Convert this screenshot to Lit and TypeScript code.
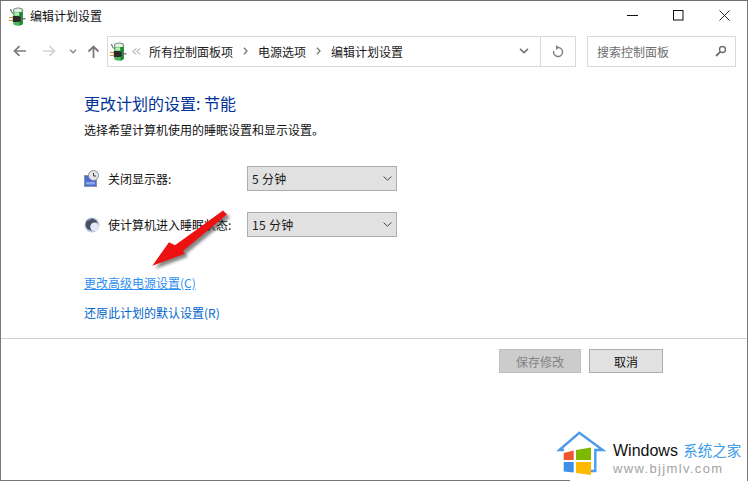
import { LitElement, html, css, svg } from "lit";
import { customElement } from "lit/decorators.js";

const plug = svg`
  <path d="M2.5 2Q3 5.5 6 7" fill="none" stroke="#6b6b6b" stroke-width="1.1"/>
  <ellipse cx="10" cy="3.6" rx="4.6" ry="2.6" fill="#e6efe6" stroke="#7c8f7c" stroke-width="1.2"/>
  <path d="M5.2 5H14.8V16Q14.8 18.8 10 18.8Q5.2 18.8 5.2 16Z" fill="#4cb854"/>
  <path d="M11.5 5H14.8V16Q14.8 18 11.5 18.5Z" fill="#1f8a3c"/>
  <path d="M6.5 5.5H11V8.6H6.5Z" fill="#b8ecbc"/>
  <path d="M4.8 9H10Q13 9 13 12Q13 15 10 15H4.8Z" fill="#2a2a2a"/>
  <path d="M12.5 11.8H17.5" stroke="#666" stroke-width="1.2"/>
  <path d="M1 10.5H5M1 13.5H5" stroke="#c79c2c" stroke-width="1.2"/>`;

@customElement("app-root")
export class AppRoot extends LitElement {
  static styles = css`
    :host { display: block; width: 748px; height: 481px; }
    .win {
      position: relative; box-sizing: border-box; width: 748px; height: 481px; overflow: hidden;
      background: #fff; border: 1px solid #7a7a7a; border-top: 1px solid #6f6f6f; border-bottom: none;
      font-family: "Noto Sans CJK SC", "Noto Sans", sans-serif; font-size: 12px; color: #1a1a1a;
      display: flex; flex-direction: column;
    }
    .title { height: 30px; display: flex; align-items: center; padding-left: 7px; gap: 3px; flex: none; }
    .title .t { flex: 1; font-size: 12px; color: #111; padding-bottom: 1px; }
    .caps { display: flex; height: 30px; }
    .cap { width: 46px; display: flex; align-items: center; justify-content: center; margin-bottom: 1px; }
    .nav { height: 30px; margin-top: 5px; display: flex; align-items: center; flex: none; padding-left: 12px; }
    .navbtns { width: 94px; display: flex; align-items: center; flex: none; }
    .b1 { width: 30px; display: flex; } .b2 { width: 26px; display: flex; } .b3 { width: 18px; display: flex; } .b4 { width: 20px; display: flex; }
    .addr {
      box-sizing: border-box; width: 469px; height: 31px; border: 1px solid #d9d9d9; display: flex; align-items: center;
      flex: none;
    }
    .crumbs { flex: 1; display: flex; align-items: center; padding-left: 1px; color: #1a1a1a; }
    .pi { margin-right: 4px; }
    .back { margin-right: 8px; display: flex; }
    .cr { margin-right: 10px; }
    .sep { margin-right: 10px; display: flex; }
    .addr .dd { width: 40px; height: 100%; border-right: 1px solid #d9d9d9; display: flex; align-items: center; justify-content: center; box-sizing: border-box; padding-left: 6px; }
    .addr .rf { width: 34px; display: flex; align-items: center; justify-content: center; }
    .search {
      box-sizing: border-box; width: 149px; height: 31px; margin-left: 11px; border: 1px solid #d9d9d9; display: flex;
      align-items: center; justify-content: space-between; padding: 0 8px 0 9px; color: #6d6d6d; flex: none;
    }
    .body { flex: 1; display: flex; flex-direction: column; padding: 26px 0 0 83px; }
    h1 { margin: 0; font-size: 16px; font-weight: 400; color: #003399; line-height: 22px; }
    .sub { line-height: 18px; margin-top: 7px; color: #111; }
    .rows { margin-top: 27px; display: flex; flex-direction: column; gap: 21px; }
    .row { display: flex; align-items: center; height: 25px; }
    .ic { width: 24px; display: flex; flex: none; }
    .lbl { width: 139px; flex: none; color: #111; }
    .select {
      box-sizing: border-box; width: 150px; height: 25px; background: #e1e1e1; border: 1px solid #adadad;
      display: flex; align-items: center; justify-content: space-between; padding: 0 4px 0 4px; font-size: 12px; letter-spacing: .3px;
    }
    .links { margin-top: 37px; display: flex; flex-direction: column; gap: 12px; }
    a { color: #0066cc; line-height: 18px; }
    a.u { text-decoration: underline; color: #2f8fef; }
    .foot {
      margin: 16px 0 0 -83px; border-top: 1px solid #cfcfcf; padding: 10px 84px 0 0; display: flex; justify-content: flex-end; gap: 8px;
    }
    .btn { box-sizing: border-box; height: 24px; border: 1px solid #adadad; background: #e1e1e1; display: flex; align-items: center; justify-content: center; }
    .save { width: 82px; background: #cccccc; border-color: #bfbfbf; color: #838383; }
    .cancel { width: 74px; color: #111; }
    .arrow { position: absolute; left: 150px; top: 200px; }
    .mark { position: absolute; left: 556px; top: 431px; width: 192px; height: 50px; display: flex; }
    .logo { flex: none; overflow: visible; }
    .mtext { margin-left: 6px; padding-top: 8px; }
    .m1 { font-family: "Liberation Sans", sans-serif; font-size: 16px; line-height: 20px; color: #111; white-space: nowrap; }
    .m1 span { font-family: "Noto Sans CJK SC", sans-serif; color: #3d9be9; font-size: 14.5px; margin-left: 1px; }
    .m2 { font-family: "Liberation Sans", sans-serif; font-size: 13px; letter-spacing: 1.35px; color: #a3a3a3; line-height: 15px; margin-top: 0; white-space: nowrap; }
    .edge { position: absolute; left: -1px; bottom: 0; width: 570px; height: 1px; background: #777; }
  `;

  render() {
    return html`<div class="win">
      <div class="title">
        <svg width="19" height="19" viewBox="0 0 19 19" style="flex:none">${plug}</svg>
        <span class="t">编辑计划设置</span>
        <div class="caps">
          <div class="cap"><svg width="11" height="11"><path d="M0 5.5H11" stroke="#111"/></svg></div>
          <div class="cap"><svg width="11" height="11"><rect x=".5" y=".5" width="9.5" height="9.5" fill="none" stroke="#111"/></svg></div>
          <div class="cap"><svg width="11" height="11"><path d="M.5 .5L10.5 10.5M10.5 .5L.5 10.5" stroke="#111" stroke-width=".9"/></svg></div>
        </div>
      </div>
      <div class="nav">
        <div class="navbtns">
          <span class="b1"><svg width="14" height="12" viewBox="0 0 14 12"><path d="M13 6H2M6.5 1.2L1.5 6l5 4.8" fill="none" stroke="#7a7a7a" stroke-width="1.7"/></svg></span>
          <span class="b2"><svg width="13" height="12" viewBox="0 0 13 12"><path d="M0 6H11M6.5 1.2L11.5 6l-5 4.8" fill="none" stroke="#d3d3d3" stroke-width="1.7"/></svg></span>
          <span class="b3"><svg width="8" height="5" viewBox="0 0 8 5"><path d="M1 .8L4 3.8L7 .8" fill="none" stroke="#8a8a8a" stroke-width="1.5"/></svg></span>
          <span class="b4"><svg width="13" height="13" viewBox="0 0 13 13"><path d="M6.5 13V2M1.5 6.5l5-5 5 5" fill="none" stroke="#7a7a7a" stroke-width="1.8"/></svg></span>
        </div>
        <div class="addr">
          <div class="crumbs">
            <svg class="pi" width="19" height="19" viewBox="0 0 19 19">${plug}</svg>
            <span class="back"><svg width="9" height="7" viewBox="0 0 9 7"><path d="M4 .5L1 3.5L4 6.5M8 .5L5 3.5L8 6.5" fill="none" stroke="#8a8a8a"/></svg></span>
            <span class="cr">所有控制面板项</span>
            <span class="sep"><svg width="5" height="8" viewBox="0 0 5 8"><path d="M1 .8L4 4L1 7.2" fill="none" stroke="#777" stroke-width="1.3"/></svg></span>
            <span class="cr">电源选项</span>
            <span class="sep"><svg width="5" height="8" viewBox="0 0 5 8"><path d="M1 .8L4 4L1 7.2" fill="none" stroke="#777" stroke-width="1.3"/></svg></span>
            <span class="cr">编辑计划设置</span>
          </div>
          <div class="dd"><svg width="10" height="6" viewBox="0 0 10 6"><path d="M1 .8L5 4.6L9 .8" fill="none" stroke="#777" stroke-width="1.6"/></svg></div>
          <div class="rf"><svg width="12" height="13" viewBox="0 0 12 13"><path d="M6 2.5A4.5 4.5 0 1 1 1.7 6" fill="none" stroke="#808080" stroke-width="1.4"/><path d="M4 0L7.2 2.5L4 5Z" fill="#808080"/></svg></div>
        </div>
        <div class="search">
          <span>搜索控制面板</span>
          <svg width="12" height="12" viewBox="0 0 12 12"><circle cx="7.5" cy="4.5" r="3" fill="none" stroke="#6f6f6f" stroke-width="1.4"/><path d="M5.2 6.8L1 11" stroke="#6f6f6f" stroke-width="1.8"/></svg>
        </div>
      </div>
      <div class="body">
        <h1>更改计划的设置: 节能</h1>
        <div class="sub">选择希望计算机使用的睡眠设置和显示设置。</div>
        <div class="rows">
          <div class="row">
            <span class="ic"><svg width="16" height="17" viewBox="0 0 16 17">
              <rect x=".5" y="5.5" width="12" height="11" fill="#4a6fd6" stroke="#8a93a8"/>
              <path d="M2 14.5H11V12H2Z" fill="#8fa6e8"/>
              <circle cx="9.5" cy="5.5" r="5" fill="#e4e6ea" stroke="#8c8c8c"/>
              <path d="M9.5 2.8V6H12" fill="none" stroke="#3c3c3c"/></svg></span>
            <span class="lbl">关闭显示器:</span>
            <div class="select"><span>5 分钟</span><svg width="9" height="5" viewBox="0 0 9 5"><path d="M.6 .6L4.5 4.2L8.4 .6" fill="none" stroke="#444"/></svg></div>
          </div>
          <div class="row">
            <span class="ic"><svg width="16" height="16" viewBox="0 0 16 16">
              <circle cx="8" cy="8" r="7.6" fill="#b4c8de"/>
              <circle cx="7.6" cy="7.6" r="6" fill="#4a4f60"/>
              <circle cx="10.6" cy="9.8" r="4.4" fill="#dfe8f3"/>
              <path d="M3.5 4A6 6 0 0 1 7 2.2" fill="none" stroke="#8f9bb0"/></svg></span>
            <span class="lbl">使计算机进入睡眠状态:</span>
            <div class="select"><span>15 分钟</span><svg width="9" height="5" viewBox="0 0 9 5"><path d="M.6 .6L4.5 4.2L8.4 .6" fill="none" stroke="#444"/></svg></div>
          </div>
        </div>
        <div class="links">
          <a class="u">更改高级电源设置(C)</a>
          <a>还原此计划的默认设置(R)</a>
        </div>
        <div class="foot">
          <div class="btn save">保存修改</div>
          <div class="btn cancel">取消</div>
        </div>
      </div>
      <svg class="arrow" width="90" height="80" viewBox="0 0 90 80">
        <defs><filter id="s" x="-30%" y="-30%" width="160%" height="160%"><feGaussianBlur stdDeviation="1.8"/></filter></defs>
        <path d="M1.3 64.7L18 41.3L24 44.2L72 9.5L76 13.5L32 50L33.8 52.8Z" fill="#222" opacity=".55" filter="url(#s)" transform="translate(3 3)"/>
        <path d="M1.3 64.7L18 41.3L24 44.2L72 9.5L76 13.5L32 50L33.8 52.8Z" fill="#ee1111"/>
      </svg>
      <div class="mark">
        <svg class="logo" width="50" height="46" viewBox="0 0 50 46">
          <path d="M7 18H2.3L22.3 .8L45.7 18H38.3V39H34" fill="none" stroke="#4a9bea" stroke-width="2.4"/>
          <path d="M6.7 21L16.7 18.5V28H6.7Z" fill="#f0562b"/>
          <path d="M19 18L34 15.5V28H19Z" fill="#7eb800"/>
          <path d="M6.7 30H16.7V40.5L6.7 39.5Z" fill="#3f8fe8"/>
          <path d="M19 30H34V43L19 41Z" fill="#ffb900"/>
        </svg>
        <div class="mtext">
          <div class="m1">Windows <span>系统之家</span></div>
          <div class="m2">www.bjjmlv.com</div>
        </div>
      </div>
      <div class="edge"></div>
    </div>`;
  }
}
